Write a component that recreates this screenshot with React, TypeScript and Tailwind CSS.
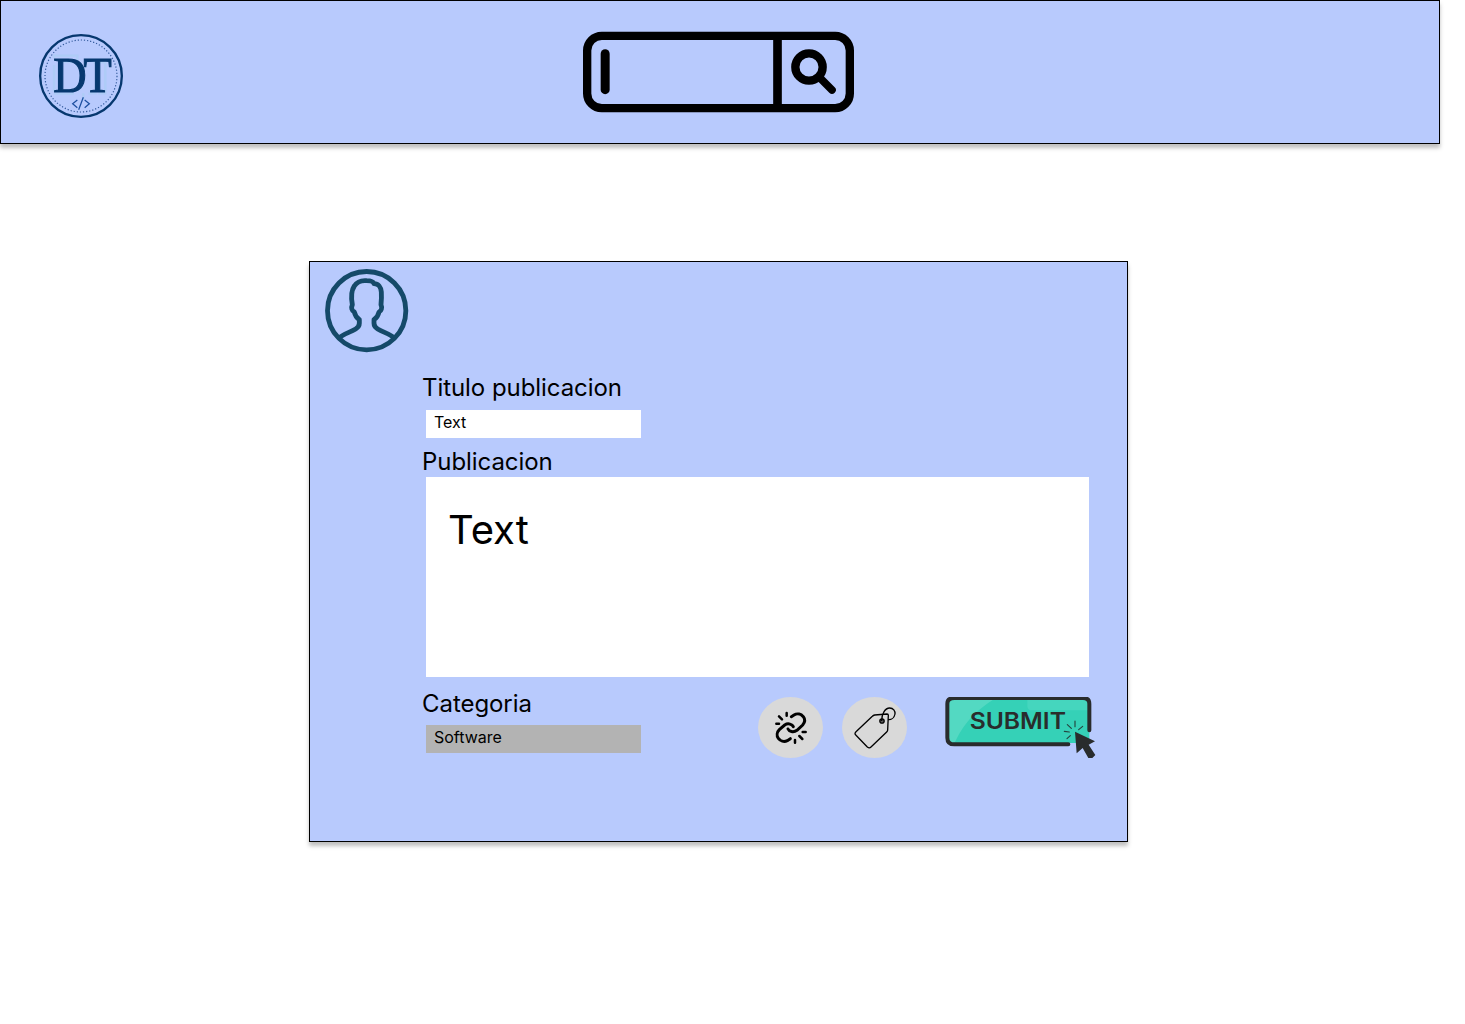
import React from "react";

function Logo() {
  return (
    <svg className="h-[86px] w-[86px]" viewBox="24 24 258 258" fill="none">
      <g stroke="#a9cdf4" strokeWidth="7" opacity="0.7">
        <path d="M72 100V92H142V108M190 112H226V205H205M72 206H132M72 120V200M100 110H140M160 205V225M175 205H200" />
      </g>
      <circle cx="153" cy="153" r="122.500" stroke="#06386f" strokeWidth="7" />
      <circle cx="153" cy="153" r="108" stroke="#31599b" strokeWidth="3.600" strokeDasharray="3.600 5.800" />
      <text
        transform="translate(70 202) scale(0.9 1)"
        fontSize="154"
        fill="#06386f"
        stroke="#06386f"
        strokeWidth="3.500"
        fontFamily="'Liberation Serif', serif"
        textLength="195"
        lengthAdjust="spacing"
      >
        DT
      </text>
      <path d="M142 225L128 236L142 248M164 225L178 236L164 248M160 217L146 254" stroke="#1d4fa0" strokeWidth="3.800" />
    </svg>
  );
}

function SearchBar() {
  return (
    <svg className="h-[82px] w-[272px]" viewBox="24 33 816 246" fill="none" stroke="#000">
      <rect x="36.500" y="47.500" width="788" height="217" rx="44" strokeWidth="25" />
      <path d="M607.500 48V264" strokeWidth="26" />
      <path d="M90.500 101V209" strokeWidth="27" strokeLinecap="round" />
      <circle cx="702" cy="141" r="41" strokeWidth="25" />
      <path d="M736 175L771 210" strokeWidth="23" strokeLinecap="round" />
    </svg>
  );
}

function Avatar() {
  return (
    <svg className="h-[84px] w-[84px]" viewBox="60 42 252 252" fill="none" stroke="#154a69" strokeWidth="14.500">
      <circle cx="185" cy="167" r="117.500" />
      <path
        d="M104 248C114 237 134 233 152 222C160 217 163 211 163 205V194C153 188 150 180 148 171C140 167 138 158 142 149C138 126 139 106 148 93C157 79 174 76 185 77C197 77 205 81 207 86C220 86 228 96 229 111C230 126 229 138 228 149C232 158 229 167 222 171C220 180 217 188 207 194V205C207 211 210 217 218 222C236 233 256 237 266 248"
        strokeLinejoin="round"
      />
    </svg>
  );
}

function LinkIcon() {
  return (
    <svg className="h-[61px] w-[65px]" viewBox="24 21 195 183" fill="none" stroke="#000" strokeLinecap="round">
      <g strokeWidth="9">
        <path d="M124 80L132 75C142 69 153 72 160 80C166 88 164 98 158 105L141 121C130 129 117 124 114 117" />
        <path d="M121 146L112 152C102 157 91 153 85 145C79 137 81 126 88 119L104 105C115 98 127 103 130 110" />
      </g>
      <path d="M110 69V77M87 79L96 88M79 101H87M158 126H167M148 138L157 147M135 150V158" strokeWidth="7.500" />
    </svg>
  );
}

function TagIcon() {
  return (
    <svg className="h-[61px] w-[65px]" viewBox="276 21 195 183" fill="none" stroke="#000" strokeWidth="4">
      <path d="M374 75L411 72Q415 72 415 76L413 120Q413 123 410 126L363 171Q358 176 352 171L318 136Q312 131 318 125L367 79Q370 76 374 75Z" strokeLinejoin="round" />
      <circle cx="396" cy="93" r="6.500" fill="#606060" />
      <path d="M395 93C395 72 405 54 419 54C430 54 436 63 435 72C433 83 424 90 414 89" />
    </svg>
  );
}

function SubmitArt() {
  return (
    <svg className="h-[61px] w-[151px]" viewBox="30 36 453 183">
      <path d="M50 37H450Q463 37 463 50V174H50Q37 174 37 162V50Q37 37 50 37Z" fill="#35d1b7" />
      <path d="M42 42H178C130 72 91 106 60 171H42Z" fill="#53d9c2" />
      <path d="M277 40H460V76H291Q277 76 277 62Z" fill="#45d6be" />
      <path d="M400 178H58Q37 178 37 158V56Q37 39 58 39H444Q463 39 463 56V136" fill="none" stroke="#292c2c" strokeWidth="12" strokeLinecap="round" />
      <text x="104" y="131" fontFamily="Inter, sans-serif" fontWeight="600" fontSize="67" fill="#292c2c" textLength="289" lengthAdjust="spacingAndGlyphs">SUBMIT</text>
      <path d="M388 139L403 141M397 119L409 130M420 108V125M443 124L431 134M396 161L406 152" stroke="#25453f" strokeWidth="3.500" strokeLinecap="round" />
      <path d="M420 140L480 169L461 179L481 210L472 219H460L443 189L425 205Z" fill="#292c2c" />
    </svg>
  );
}

function Label({ children }: { children: React.ReactNode }) {
  return <label className="block h-[29px] text-2xl leading-[29px] tracking-[-0.06px]">{children}</label>;
}

export default function App() {
  return (
    <div className="h-[1024px] w-[1465px] overflow-hidden bg-white font-['Inter',sans-serif] text-black">
      <header className="flex h-36 w-[1440px] items-start border border-black bg-[#b8cafd] shadow-[0_4px_4px_rgba(0,0,0,0.25)]">
        <div className="mt-8 ml-[37px]">
          <Logo />
        </div>
        <div className="mt-[30px] ml-[459px]">
          <SearchBar />
        </div>
      </header>

      <main className="mt-[117px] ml-[309px] h-[581px] w-[819px] border border-black bg-[#b8cafd] shadow-[0_4px_4px_rgba(0,0,0,0.25)]">
        <div className="pt-[7px] pl-[15px]">
          <Avatar />
        </div>
        <div className="mt-5 ml-28">
          <Label>Titulo publicacion</Label>
          <div className="mt-2 ml-1 h-7 w-[215px] bg-white pt-[3px] pl-2 text-base leading-[19px]">Text</div>
          <div className="mt-[9px]">
            <Label>Publicacion</Label>
          </div>
          <div className="mt-px ml-1 h-[200px] w-[663px] bg-white pt-[29px] pl-[22px] text-[40px] leading-[48px]">Text</div>
          <div className="mt-3 flex items-start">
            <div className="w-[336px]">
              <Label>Categoria</Label>
              <div className="mt-[7px] ml-1 h-7 w-[215px] bg-[#b3b3b3] pt-[3px] pl-2 text-base leading-[19px]">Software</div>
            </div>
            <button className="mt-2 h-[61px] w-[65px] rounded-[50%] bg-[#d9d9d9]" aria-label="Link">
              <LinkIcon />
            </button>
            <button className="mt-2 ml-[19px] h-[61px] w-[65px] rounded-[50%] bg-[#d9d9d9]" aria-label="Tag">
              <TagIcon />
            </button>
            <button className="mt-2 ml-[38px] h-[61px] w-[151px]">
              <SubmitArt />
            </button>
          </div>
        </div>
      </main>
    </div>
  );
}
